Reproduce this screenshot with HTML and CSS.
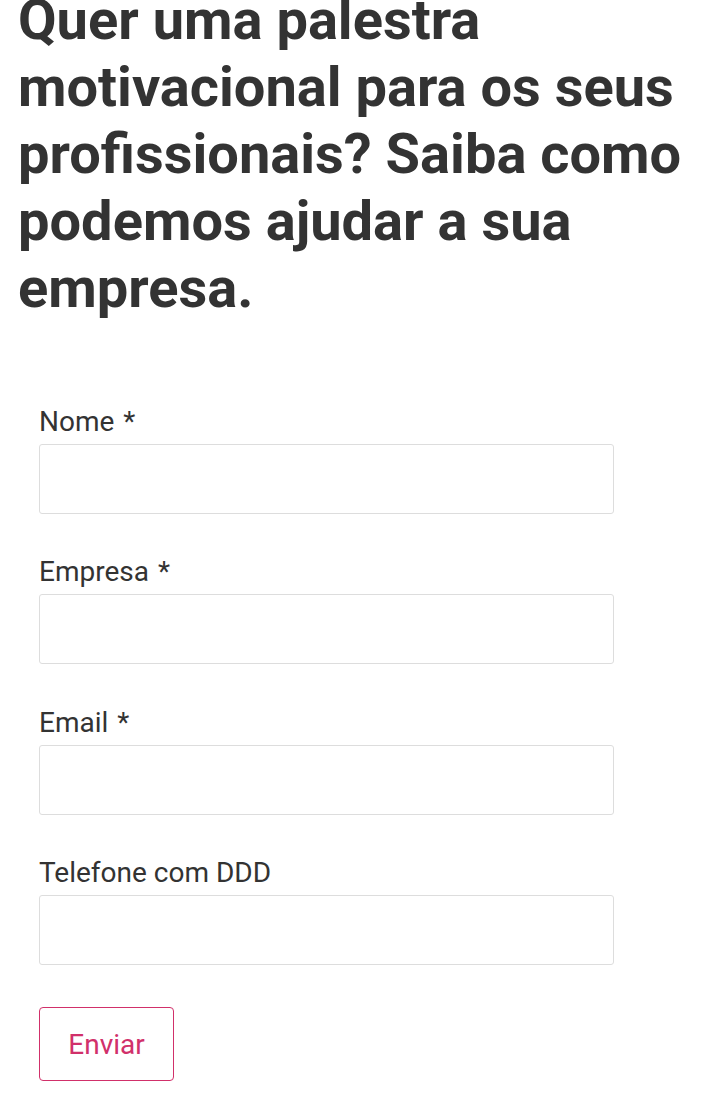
FILE: index.html
```html
<!DOCTYPE html>
<html lang="pt">
<head>
<meta charset="utf-8">
<link rel="stylesheet" href="styles.css">
</head>
<body>
<h1 class="title">Quer uma palestra motivacional para os seus profissionais? Saiba como podemos ajudar a sua empresa.</h1>
<form class="form">
  <div class="field">
    <label class="label">Nome <span class="req">*</span></label>
    <input class="input" type="text">
  </div>
  <div class="field">
    <label class="label">Empresa <span class="req">*</span></label>
    <input class="input" type="text">
  </div>
  <div class="field">
    <label class="label">Email <span class="req">*</span></label>
    <input class="input" type="text">
  </div>
  <div class="field">
    <label class="label">Telefone com DDD</label>
    <input class="input" type="text">
  </div>
  <button class="button" type="button">Enviar</button>
</form>
</body>
</html>
```

FILE: styles.css
```css
html, body {
  margin: 0;
  padding: 0;
  background: #fff;
}
body {
  font-family: Roboto, "Liberation Sans", sans-serif;
  color: #333;
  overflow: hidden;
}
.title {
  margin: -13px 0 0 0;
  padding: 0 20px 0 18px;
  font-size: 56px;
  line-height: 67px;
  font-weight: 700;
  color: #333;
}
.form {
  display: flex;
  flex-direction: column;
  align-items: flex-start;
  padding: 83px 0 0 39px;
}
.field {
  display: flex;
  flex-direction: column;
  margin-bottom: 41.33px;
}
.label {
  font-size: 28px;
  line-height: 34px;
  margin-bottom: 5px;
}
.req {
  margin-left: 2px;
}
.input {
  box-sizing: border-box;
  width: 575px;
  height: 70px;
  border: 1px solid #ddd;
  border-radius: 3px;
  background: #fff;
  margin: 0;
}
.button {
  box-sizing: border-box;
  margin-top: 1px;
  width: 135px;
  height: 74px;
  border: 1px solid #d1306a;
  border-radius: 4px;
  background: #fff;
  color: #d1306a;
  font-family: Roboto, "Liberation Sans", sans-serif;
  font-size: 28px;
  padding: 0;
}
```
